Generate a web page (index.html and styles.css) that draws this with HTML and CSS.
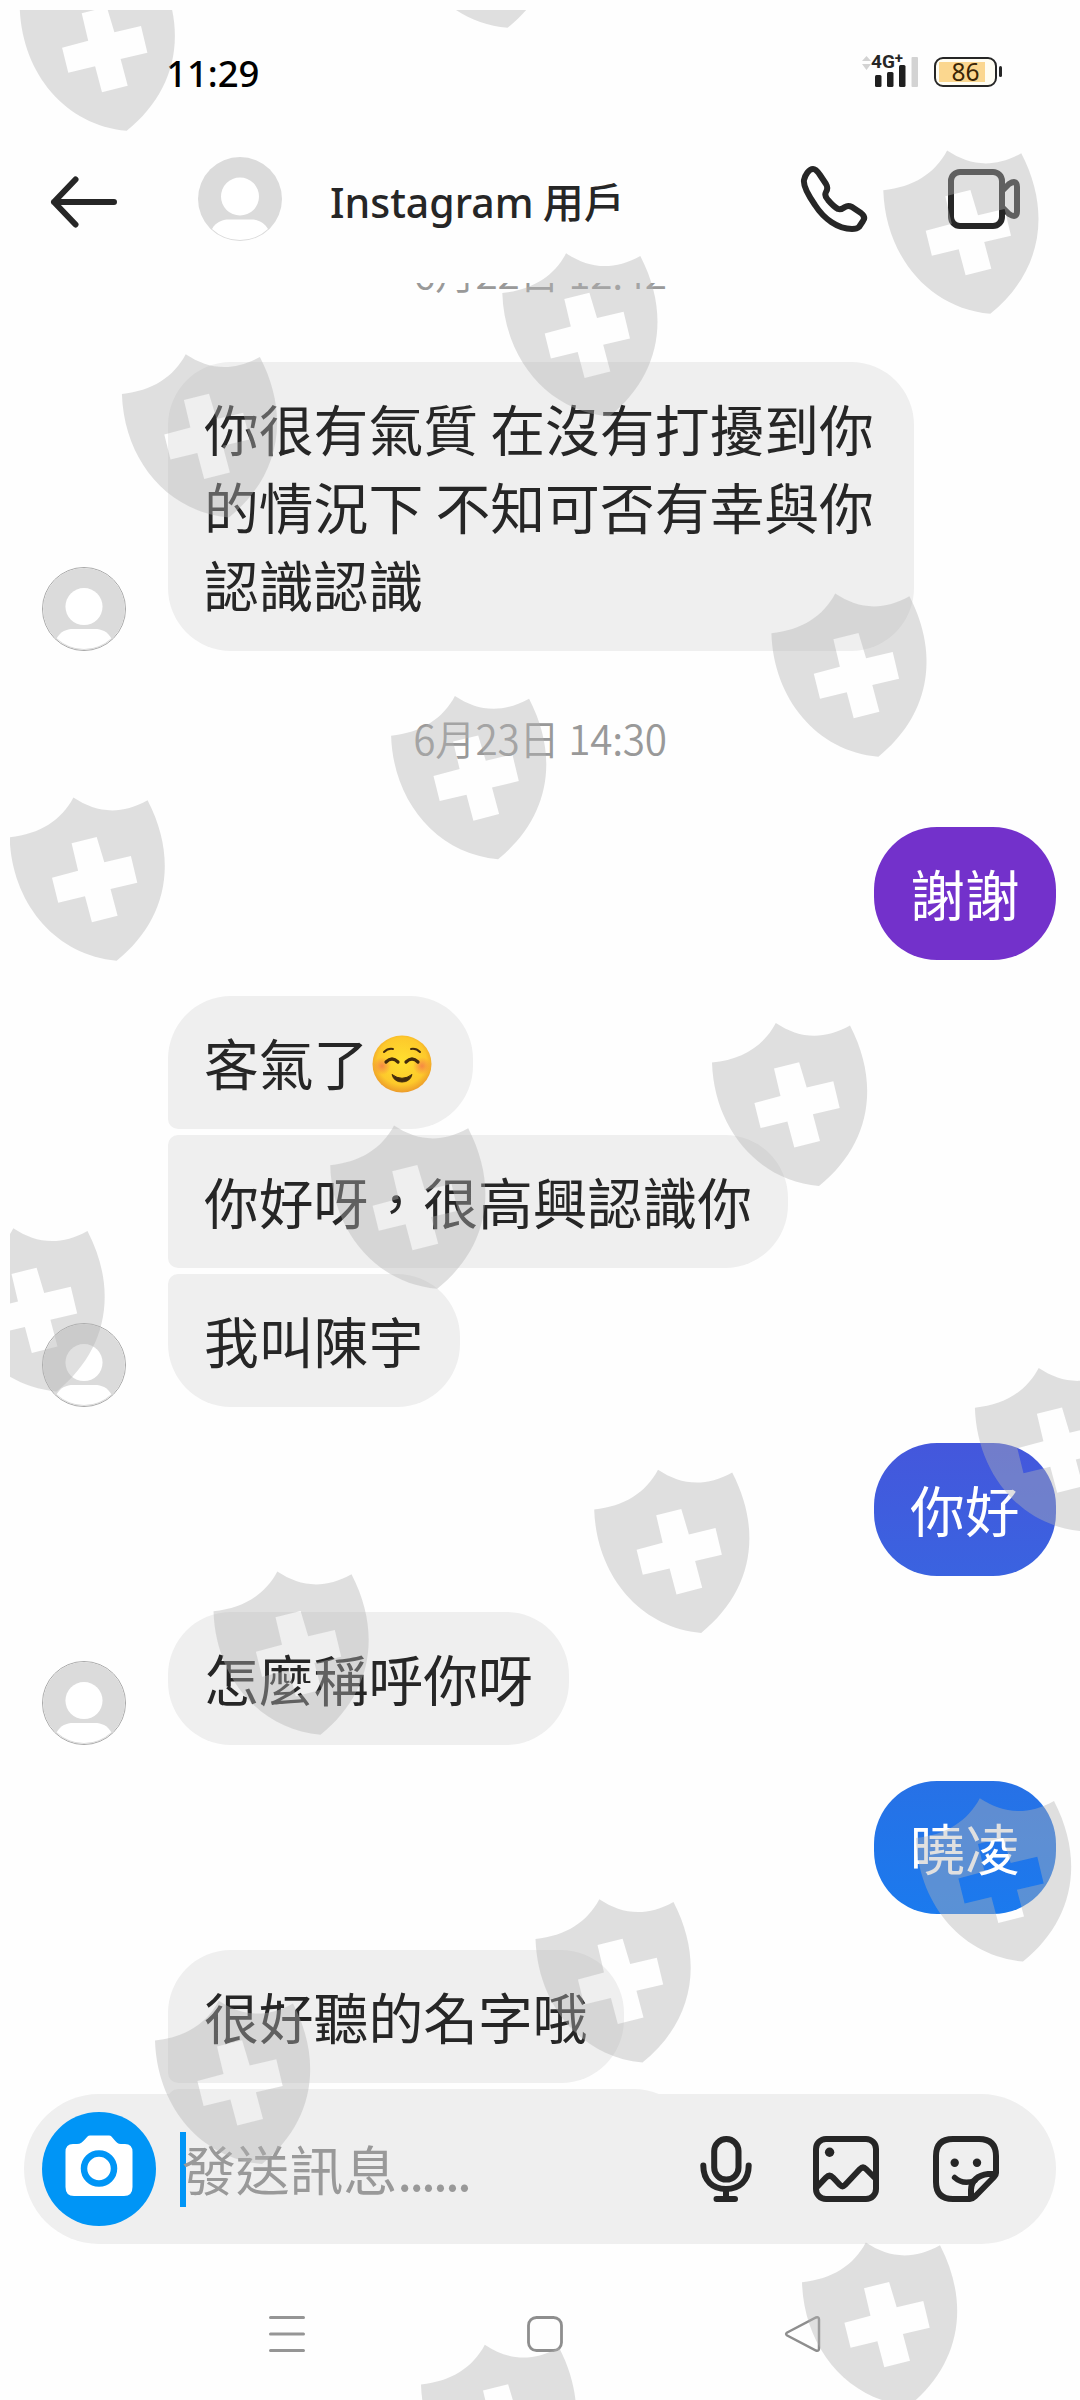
FILE: index.html
```html
<!DOCTYPE html>
<html lang="zh-Hant">
<head>
<meta charset="utf-8">
<title>Instagram 用戶</title>
<link rel="stylesheet" href="styles.css">
</head>
<body>
<svg class="defs" width="0" height="0" aria-hidden="true">
  <defs>
    <symbol id="avatar" viewBox="0 0 84 84">
      <circle cx="42" cy="42" r="42" fill="#dbdbdb"/>
      <circle cx="42" cy="39.5" r="19" fill="#fff"/>
      <path d="M14 72C18 65 24 62.500 31 62.500H53C60 62.500 66 65 70 72A41 41 0 0 1 14 72Z" fill="#fff"/>
    </symbol>
    <path id="shield" fill-rule="evenodd" d="M0 0C30 -3 52 -17 63.800 -39.700C86 -25 110 -21.500 138 -37C170 25 156 84 107 123.500C45 118 2 65 0 0ZM42.400 40.400L48.600 65.400L75.400 59L82.300 85L108 78.400L100.900 51.700L127.700 45.400L121.300 18.700L94.700 25L87.100 -0.300L62 5.900L68.500 33.400Z"/>
  </defs>
</svg>
<div class="phone">
  <div class="status">
    <span class="clock">11:29</span>
    <div class="indicators">
      <div class="signal">
        <svg width="56" height="34" viewBox="0 0 56 34">
          <path d="M0 8L4.500 3L9 8ZM0 11H9L4.500 17Z" fill="#d3d3d3"/>
          <g fill="#1f1f1f"><rect x="13" y="22" width="6.500" height="12" rx="1.500"/><rect x="25" y="19" width="6.500" height="15" rx="1.500"/><rect x="37" y="12" width="6.500" height="22" rx="1.500"/></g>
          <rect x="49.500" y="4" width="6.500" height="30" rx="1" fill="#d3d3d3"/>
        </svg>
        <span class="net">4G<sup>+</sup></span>
      </div>
      <div class="battery"><span>86</span></div>
    </div>
  </div>

  <header class="header">
    <svg class="back" width="68" height="52" viewBox="0 0 68 52"><path d="M64 26H4M25.500 3.500L4 26L25.500 48.500" fill="none" stroke="#262626" stroke-width="6" stroke-linecap="round" stroke-linejoin="round"/></svg>
    <svg class="head-avatar" width="84" height="84"><use href="#avatar"/></svg>
    <h1 class="title"><span class="latin">Instagram</span> <span>用戶</span></h1>
    <svg class="call" width="70" height="70" viewBox="799 164 70 70"><path d="M813 169C816 169 818 172 820 175L826 184Q828.500 188 826 192Q824 196 828 200Q834 207 838 209Q841 210 845 207Q848 205 852 207L861 213Q866 217 863 221L859 227Q857 229 852 229C838 229 824 219 815 205C808 195 803 186 804 180C805 175 809 169 813 169Z" fill="none" stroke="#262626" stroke-width="6" stroke-linejoin="round"/></svg>
    <svg class="video" width="74" height="62" viewBox="947 168 74 62"><g fill="none" stroke="#262626" stroke-width="6" stroke-linejoin="round"><rect x="951" y="172" width="51" height="54" rx="9"/><path d="M1002 191L1009 184Q1017 179 1017 187V211Q1017 219 1009 214L1002 207"/></g></svg>
  </header>

  <main class="thread">
    <div class="stamp first">6月22日 12:42</div>
    <div class="row"><svg class="pic" width="84" height="84"><use href="#avatar"/></svg>
      <div class="bubble">你很有氣質 在沒有打擾到你<br>的情況下 不知可否有幸與你<br>認識認識</div></div>
    <div class="stamp">6月23日 14:30</div>
    <div class="row mine"><div class="bubble violet">謝謝</div></div>
    <div class="row"><div class="bubble open">客氣了<svg class="emoji" width="60" height="58" viewBox="0 0 60 58">
        <defs>
          <radialGradient id="face" cx=".5" cy=".45" r=".55"><stop offset="0" stop-color="#ffe02f"/><stop offset=".75" stop-color="#fdc92b"/><stop offset="1" stop-color="#ec9b2a"/></radialGradient>
          <radialGradient id="blush"><stop offset="0" stop-color="#f4734c" stop-opacity=".75"/><stop offset="1" stop-color="#f4734c" stop-opacity="0"/></radialGradient>
        </defs>
        <ellipse cx="30" cy="29" rx="29.500" ry="28.500" fill="url(#face)"/>
        <circle cx="10" cy="31" r="9" fill="url(#blush)"/><circle cx="50" cy="31" r="9" fill="url(#blush)"/>
        <g fill="none" stroke="#422b0d" stroke-linecap="round"><path d="M12 17Q16 13 21 14M48 17Q44 13 39 14" stroke-width="2"/><path d="M14 27Q20 21 26 27M34 27Q40 21 46 27" stroke-width="3.200"/></g>
        <path d="M20 39.500Q30 47 40 39.500Q38 47 30 47Q22 47 20 39.500Z" fill="#422b0d" stroke="#422b0d"/>
      </svg></div></div>
    <div class="row tight"><div class="bubble middle">你好呀，很高興認識你</div></div>
    <div class="row tight"><svg class="pic" width="84" height="84"><use href="#avatar"/></svg><div class="bubble close">我叫陳宇</div></div>
    <div class="row mine"><div class="bubble indigo">你好</div></div>
    <div class="row"><svg class="pic" width="84" height="84"><use href="#avatar"/></svg><div class="bubble">怎麼稱呼你呀</div></div>
    <div class="row mine"><div class="bubble blue">曉凌</div></div>
    <div class="row"><div class="bubble open">很好聽的名字哦</div></div>
    <div class="row tight"><div class="bubble next"></div></div>
  </main>

  <div class="composer">
    <div class="camera"><svg width="68" height="62" viewBox="65 2135 68 62">
      <path d="M90 2135.500H109C113 2135.500 115 2144 121 2144H125Q132.500 2144 132.500 2152V2187Q132.500 2196 124 2196H74Q65.500 2196 65.500 2187V2152Q65.500 2144 73 2144H77C84 2144 86 2135.500 90 2135.500Z" fill="#fff"/>
      <circle cx="99" cy="2168.500" r="15" fill="#fff" stroke="#0095f6" stroke-width="6.500"/></svg></div>
    <span class="caret"></span>
    <span class="hint">發送訊息<span class="dots">......</span></span>
    <svg class="mic" width="54" height="70" viewBox="699 2134 54 70"><g fill="none" stroke="#262626" stroke-width="6" stroke-linecap="round"><rect x="714.200" y="2139" width="24.300" height="40.600" rx="12.100"/><path d="M703.300 2165.500C703.300 2181 713 2189 726 2189S748.700 2181 748.700 2165.500M726 2189V2199M716.500 2199H735"/></g></svg>
    <svg class="photo" width="66" height="66" viewBox="813 2136 66 66"><g fill="none" stroke="#262626" stroke-width="6" stroke-linejoin="round"><rect x="816" y="2139" width="60" height="60" rx="10"/><path d="M816 2188L826 2177.500Q829.500 2174 833 2177.500L840 2185Q842.500 2187.500 845 2185L860 2169Q863 2166 866 2169L876 2179"/></g><circle cx="829.600" cy="2152.300" r="4.700" fill="#262626"/></svg>
    <svg class="sticker" width="66" height="66" viewBox="933 2136 66 66"><g fill="none" stroke="#262626" stroke-width="6" stroke-linecap="round" stroke-linejoin="round"><path d="M996 2173V2156Q996 2139 979 2139H953Q936 2139 936 2156V2182Q936 2199 953 2199H970Q972.500 2199 975 2196.500L994 2177Q996 2175 996 2173ZM995 2174H988C978 2175 971 2181 971 2190V2198"/><path d="M954.600 2177.500C960 2182.500 967 2183.500 975 2180.500" stroke-width="5.500"/></g><g fill="#262626"><circle cx="954.700" cy="2162.800" r="4.200"/><circle cx="977" cy="2162.800" r="4.200"/></g></svg>
  </div>

  <nav class="nav">
    <svg width="38" height="38" viewBox="0 0 38 38"><path d="M2.500 2.500H35.500M2.500 19H35.500M2.500 35.500H35.500" stroke="#959595" stroke-width="3" stroke-linecap="round" fill="none"/></svg>
    <svg width="38" height="38" viewBox="0 0 38 38"><rect x="2.500" y="2.500" width="33" height="33" rx="8" stroke="#8e8e8e" stroke-width="2.800" fill="none"/></svg>
    <svg width="38" height="38" viewBox="0 0 38 38"><path d="M3.200 17.500L32 2.500Q35 1.500 35 4.500V33.500Q35 36.500 32 35.500L3.200 20.500Q1 19 3.200 17.500Z" stroke="#8e8e8e" stroke-width="2.500" fill="none"/></svg>
  </nav>

  <svg class="watermark" width="1070" height="2390" viewBox="10 10 1070 2390" aria-hidden="true">
    <g fill="#b4b4b4" fill-opacity=".41">
      <use href="#shield" x="19.700" y="7.300"/><use href="#shield" x="400.600" y="-95.700"/>
      <use href="#shield" x="883.300" y="190.300"/><use href="#shield" x="502.300" y="293"/>
      <use href="#shield" x="121.900" y="394"/><use href="#shield" x="771.400" y="633.300"/>
      <use href="#shield" x="391.100" y="735.700"/><use href="#shield" x="9.600" y="837.300"/>
      <use href="#shield" x="712" y="1062.600"/><use href="#shield" x="330.200" y="1165.300"/>
      <use href="#shield" x="-50.500" y="1268"/><use href="#shield" x="974.900" y="1407.800"/>
      <use href="#shield" x="594.200" y="1509.400"/><use href="#shield" x="213.500" y="1611.300"/>
      <use href="#shield" x="916" y="1838"/><use href="#shield" x="535.500" y="1939"/>
      <use href="#shield" x="155" y="2040.500"/><use href="#shield" x="802" y="2282.300"/>
      <use href="#shield" x="421" y="2384.500"/>
    </g>
  </svg>
</div>
</body>
</html>
```
FILE: styles.css
```css
* { box-sizing: border-box; }
body { margin: 0; background: #fefefe; }
svg { display: block; flex: none; }
.defs { position: absolute; }
.phone {
  position: relative;
  display: flex;
  flex-direction: column;
  width: 1080px;
  height: 2400px;
  overflow: hidden;
  background: #fefefe;
  color: #262626;
  font-family: "Noto Sans CJK TC", sans-serif;
}

/* status bar */
.status {
  display: flex;
  justify-content: space-between;
  height: 115px;
  padding: 47px 77px 0 166px;
}
.clock { font: 500 36.500px/52px "Noto Sans", sans-serif; color: #000; }
.indicators { display: flex; gap: 16px; padding-top: 6px; }
.signal { position: relative; }
.net {
  position: absolute;
  left: 9px;
  top: -1px;
  font: 700 19px/20px Roboto, sans-serif;
}
.net sup { font-size: 15px; line-height: 0; vertical-align: 5px; }
.battery {
  position: relative;
  width: 63px;
  height: 30px;
  margin: 4px 6px 0 0;
  padding: 2px;
  border: 2.500px solid #262626;
  border-radius: 9px;
  background: linear-gradient(#fbd78f, #fbd78f) 2.500px 50% / 46px 20px no-repeat #fffdf2;
}
.battery span {
  display: block;
  text-align: center;
  font: 400 24.500px/22px "Noto Sans", sans-serif;
  color: #3a2505;
}
.battery::after {
  content: "";
  position: absolute;
  right: -6.500px;
  top: 7px;
  width: 2.500px;
  height: 11px;
  border-radius: 2px;
  background: #262626;
}

/* conversation header */
.header {
  display: flex;
  align-items: center;
  height: 168px;
  padding: 0 59px 0 50px;
}
.back { margin-top: 6px; }
.head-avatar { margin: 0 48px 0 80px; }
.title { margin: 3px 0 0; font-size: 41px; font-weight: 500; line-height: 60px; white-space: nowrap; }
.latin { font-family: "Noto Sans", sans-serif; }
.call { margin-left: auto; }
.video { margin-left: 78px; }

/* messages */
.thread { height: 1811px; overflow: hidden; flex: none; }
.stamp {
  margin: 57px 0 59px;
  text-align: center;
  font-size: 40.500px;
  font-weight: 350;
  line-height: 60px;
  letter-spacing: -.3px;
  color: #999;
}
.stamp.first { margin: -41px 0 60px; }
.row { display: flex; align-items: flex-end; padding: 0 24px 0 168px; }
.row + .row { margin-top: 36px; }
.row + .row.tight { margin-top: 6px; }
.pic { margin: 0 42px 0 -126px; border-radius: 50%; border: 1.500px solid #a8a8a8; }
.mine { justify-content: flex-end; }
.bubble {
  display: flex;
  align-items: center;
  padding: 25.500px 36.500px 29.500px 36px;
  border-radius: 63px;
  background: #efefef;
  font-size: 54.800px;
  line-height: 78px;
  white-space: nowrap;
}
.row:nth-child(2) .bubble { display: block; width: 746px; }
.open { border-bottom-left-radius: 10px; }
.middle { border-top-left-radius: 10px; border-bottom-left-radius: 10px; }
.close { border-top-left-radius: 10px; }
.next { width: 529px; height: 133px; border-top-left-radius: 10px; }
.emoji { margin: 6px 4px 0 4px; }
.mine .bubble { color: #fff; }
.violet { background: #7331cb; }
.indigo { background: linear-gradient(#4457dc, #3a63e0); }
.blue { background: linear-gradient(#2771e6, #1b7aee); }

/* message composer */
.composer {
  display: flex;
  align-items: center;
  flex: none;
  height: 150px;
  margin: 0 24px;
  padding: 0 57px 0 18px;
  border-radius: 75px;
  background: #efefef;
}
.camera {
  display: flex;
  align-items: center;
  justify-content: center;
  width: 114px;
  height: 114px;
  padding-bottom: 6px;
  border-radius: 50%;
  background: #0095f6;
}
.caret { width: 6px; height: 75px; margin: 0 -4px 0 24px; background: #0095f6; }
.hint { margin-top: -2px; font-size: 53.800px; line-height: 78px; color: #999; }
.dots { letter-spacing: -3px; }
.mic { margin-left: auto; }
.photo { margin-left: 60px; }
.sticker { margin-left: 54px; }

/* system navigation */
.nav { display: flex; justify-content: space-between; padding: 71px 258px 0 268px; }

.watermark { position: absolute; left: 10px; top: 10px; }
```
